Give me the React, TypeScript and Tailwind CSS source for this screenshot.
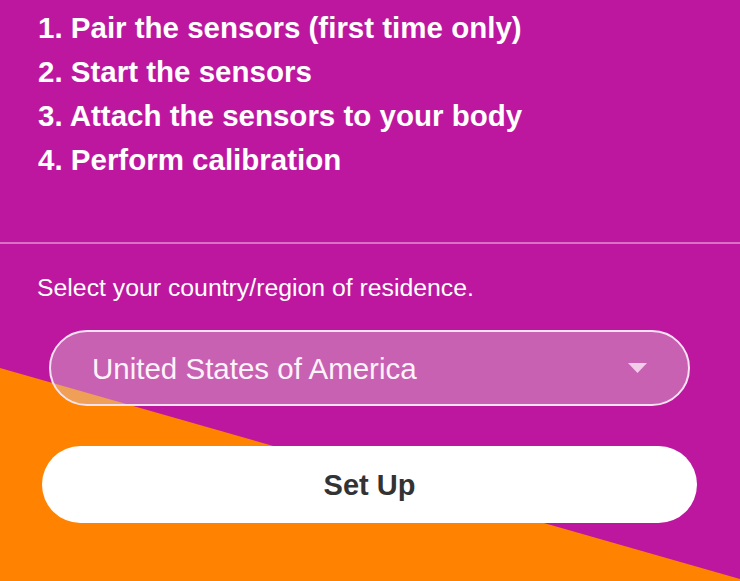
const steps = [
  "1. Pair the sensors (first time only)",
  "2. Start the sensors",
  "3. Attach the sensors to your body",
  "4. Perform calibration",
];

export default function App() {
  return (
    <div
      className="relative h-[581px] w-[740px] overflow-hidden bg-[#bd17a0] text-white"
      style={{ fontFamily: '"Liberation Sans", Arial, sans-serif' }}
    >
      {/* orange wedge behind the form */}
      <div className="pointer-events-none absolute inset-0 bg-[#ff8200] [clip-path:polygon(0_368px,100%_579px,100%_100%,0_100%)]" />

      <div className="relative flex flex-col">
        <ol className="pl-[38px] pt-[6px]">
          {steps.map((step) => (
            <li key={step} className="text-[29.5px] font-bold leading-[44px]">
              {step}
            </li>
          ))}
        </ol>

        <div className="mt-[60px] h-[2px] w-full bg-white/40" />

        <p className="mt-[29px] pl-[37px] text-[24.8px] leading-[30px]">
          Select your country/region of residence.
        </p>

        <div className="mx-[49px] mt-[27px] flex h-[76px] w-[641px] items-center justify-between rounded-full border-2 border-[#f6e2f1] bg-[rgba(218,200,205,0.42)] pl-[41px] pr-[41px]">
          <span className="pt-[2px] text-[29.5px] leading-none text-[#fdf3fb]">
            United States of America
          </span>
          <svg width="19" height="10" viewBox="0 0 19 10" aria-hidden="true">
            <polygon points="0,0 19,0 9.5,10" fill="#f2cde9" />
          </svg>
        </div>

        <button
          type="button"
          className="mx-[42px] mt-[40px] flex h-[77px] w-[655px] items-center justify-center rounded-full bg-white pt-[2px] text-[29px] font-bold text-[#333333]"
        >
          Set Up
        </button>
      </div>
    </div>
  );
}
